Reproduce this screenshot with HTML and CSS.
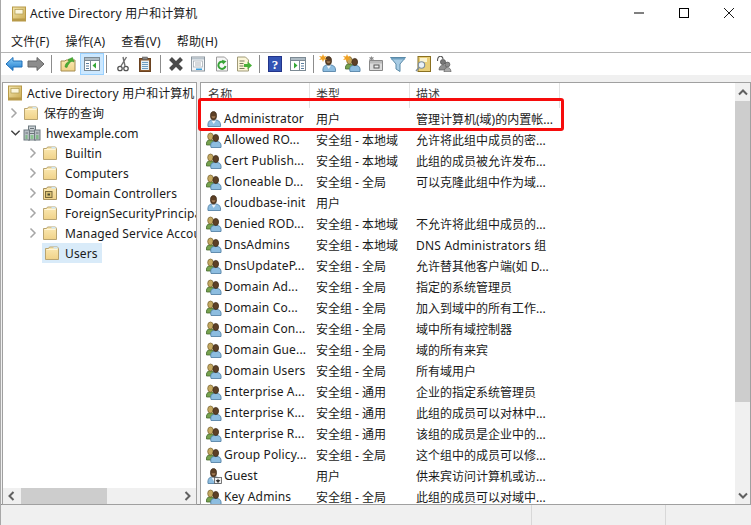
FILE: index.html
```html
<!DOCTYPE html>
<html lang="zh-CN">
<head>
<meta charset="utf-8">
<title>Active Directory 用户和计算机</title>
<link rel="stylesheet" href="styles.css">
</head>
<body>
<svg class="defs" width="0" height="0" aria-hidden="true">
  <defs>
    <linearGradient id="gBook" x1="0" y1="0" x2="1" y2="1"><stop offset="0" stop-color="#f4e7ae"/><stop offset="1" stop-color="#c9a94f"/></linearGradient>
    <linearGradient id="gFold" x1="0" y1="0" x2="0" y2="1"><stop offset="0" stop-color="#fbe9b4"/><stop offset="1" stop-color="#f0d288"/></linearGradient>
    <linearGradient id="gBlue" x1="0" y1="0" x2="0" y2="1"><stop offset="0" stop-color="#8cd0f8"/><stop offset="1" stop-color="#1c78cc"/></linearGradient>
    <symbol id="book" viewBox="0 0 16 16">
      <rect x="1.500" y="1" width="13" height="14" fill="url(#gBook)" stroke="#b89a48"/>
      <rect x="4" y="3.500" width="8" height="4.500" fill="#fbf6dc" stroke="#b09a50" stroke-width=".7"/>
      <rect x="1.500" y="12.500" width="13" height="2.500" fill="#b89a48"/>
    </symbol>
    <symbol id="folder" viewBox="0 0 16 16">
      <path d="M1.500 3.500h3l1-1.500h8l1 1.500v11h-13z" fill="url(#gFold)" stroke="#b9a470"/>
      <rect x="9.500" y="2" width="4" height="1.600" fill="#cfe6f5"/>
      <path d="M2.500 4.500h11" stroke="#fff6d8"/>
    </symbol>
    <symbol id="ou" viewBox="0 0 16 16">
      <path d="M1.500 3.500h3l1-1.500h8l1 1.500v11h-13z" fill="url(#gFold)" stroke="#a8915c"/>
      <rect x="9.500" y="2" width="4" height="1.600" fill="#cfe6f5"/>
      <rect x="3.500" y="6.500" width="6.500" height="6" fill="#d9c074" stroke="#7a6a3a"/>
      <rect x="5.500" y="8.500" width="2.500" height="2" fill="#4a4a30"/>
    </symbol>
    <symbol id="domain" viewBox="0 0 18 16">
      <rect x="5.500" y="1" width="7" height="14" fill="#c9d0d4" stroke="#6f7a80"/>
      <rect x="1" y="5" width="5.500" height="10" fill="#b5bdc2" stroke="#6f7a80"/>
      <rect x="11.500" y="5" width="5.500" height="10" fill="#b5bdc2" stroke="#6f7a80"/>
      <path d="M7 3.500h4M7 6h4M7 8.500h4M2.500 8h2.500M13 8h2.500" stroke="#6a747a"/>
      <path d="M2.500 11h2M2.500 13h2M7.500 11h3M7.500 13h3M13 11h2.500M13 13h2.500" stroke="#4fb84f" stroke-width="1.200"/>
    </symbol>
    <symbol id="user" viewBox="0 0 16 16">
      <path d="M2 15.500c-.5-4 1-6.500 4-6.500h3.500c3.500 0 5.500 2.500 5 6.500z" fill="#8dbde0" stroke="#4a7aa0" stroke-width=".8"/>
      <path d="M5.500 9.500l2.200 3.500 2.300-3.500z" fill="#eef3f8"/>
      <ellipse cx="7.500" cy="4.800" rx="3" ry="4.200" fill="#5d4026" stroke="#3a2614" stroke-width=".7"/>
      <path d="M5.500 5.300c.4 2.600 3.600 2.600 4 0z" fill="#a07a54"/>
    </symbol>
    <symbol id="guest" viewBox="0 0 16 16">
      <use href="#user"/>
      <rect x="8.500" y="9.500" width="7" height="6" fill="#f2f2f2" stroke="#5a5a5a" stroke-width=".8"/>
      <path d="M12 10.800v2M10.300 12.500h3.400L12 14.500z" stroke="#222" fill="#222" stroke-width=".8"/>
    </symbol>
    <symbol id="group" viewBox="0 0 16 16">
      <path d="M0.500 13c-.5-3 .8-5 3-5h2.500c2 0 2 3 1 5z" fill="#76a24e" stroke="#45682c" stroke-width=".8"/>
      <ellipse cx="4.500" cy="4.500" rx="2.800" ry="3.500" fill="#c4a860" stroke="#75602c" stroke-width=".7"/>
      <path d="M5 15.500c-1-4 .5-6 3.500-6h2.500c3 0 4.500 2 4 6z" fill="#8dbde0" stroke="#4a7aa0" stroke-width=".8"/>
      <ellipse cx="9.800" cy="6" rx="2.800" ry="3.600" fill="#5d4026" stroke="#3a2614" stroke-width=".7"/>
    </symbol>
    <symbol id="back" viewBox="0 0 18 16">
      <path d="M1 8l7-6.500V5h9v6H8v3.500z" fill="url(#gBlue)" stroke="#1f6fb8"/>
    </symbol>
    <symbol id="forward" viewBox="0 0 18 16">
      <path d="M17 8l-7-6.500V5H1v6h9v3.500z" fill="#8c8c8c" stroke="#666"/>
    </symbol>
    <symbol id="up" viewBox="0 0 16 16">
      <path d="M1 5h4l1-1h9v11H1z" fill="url(#gFold)" stroke="#a58c50"/>
      <path d="M5 11c0-3 2-5 4-5.500L8 3.500l4.500-2L14 6l-2-.8C10 6 8 8 7 11.500z" fill="#4cae34" stroke="#2e8a20" stroke-width=".5"/>
    </symbol>
    <symbol id="tree" viewBox="0 0 16 16">
      <rect x=".5" y="1.500" width="15" height="13" fill="#fff" stroke="#7c8a94"/>
      <rect x=".5" y="1.500" width="15" height="3" fill="#aebbc4" stroke="#7c8a94"/>
      <path d="M2 7h3v1H2zM2 9.500h3v1H2zM2 12h3v1H2z" fill="#5b7fa0"/>
      <path d="M6.500 5v9" stroke="#7c8a94"/>
      <path d="M12 6.500v6L8.500 9.500z" fill="#35a835"/>
    </symbol>
    <symbol id="view" viewBox="0 0 16 16">
      <rect x=".5" y="1.500" width="15" height="13" fill="#fff" stroke="#7c8a94"/>
      <rect x=".5" y="1.500" width="15" height="3" fill="#aebbc4" stroke="#7c8a94"/>
      <path d="M11 7h3v1h-3zM11 9.500h3v1h-3zM11 12h3v1h-3z" fill="#5b7fa0"/>
      <path d="M9.500 5v9" stroke="#7c8a94"/>
      <path d="M4 6.500v6l3.500-3z" fill="#35a835"/>
    </symbol>
    <symbol id="cut" viewBox="0 0 16 16">
      <path d="M11.500 1L6 10M8 1l2 9" stroke="#6f6f6f" stroke-width="1.400" fill="none"/>
      <circle cx="5" cy="12.500" r="2.200" fill="none" stroke="#555" stroke-width="1.300"/>
      <circle cx="11" cy="12.500" r="2.200" fill="none" stroke="#555" stroke-width="1.300"/>
    </symbol>
    <symbol id="paste" viewBox="0 0 16 16">
      <rect x="2.500" y="2.500" width="11" height="13" fill="#8a5a30" stroke="#6a4220"/>
      <rect x="4" y="4.500" width="8" height="9.500" fill="#e6f0f6"/>
      <path d="M5 6.500h6M5 8.500h6M5 10.500h6M5 12.500h6" stroke="#6d9cc0"/>
      <rect x="5.500" y="1" width="5" height="2.500" fill="#888" stroke="#555" stroke-width=".5"/>
    </symbol>
    <symbol id="del" viewBox="0 0 16 16">
      <path d="M2.500 2.500l11 11M13.500 2.500l-11 11" stroke="#4b4b4b" stroke-width="4"/>
    </symbol>
    <symbol id="props" viewBox="0 0 16 16">
      <rect x="1.500" y="1" width="13" height="14" fill="#f4f6f8" stroke="#8a949c"/>
      <rect x="2" y="1.500" width="12" height="2" fill="#b9c4cc"/>
      <rect x="3.500" y="5" width="9" height="6" fill="#fff" stroke="#9aa4ac" stroke-width=".7"/>
      <path d="M5 7h6M5 9h6" stroke="#8a949c" stroke-width=".7"/>
      <rect x="6" y="12.500" width="6" height="1.500" fill="#3ba0dc"/>
    </symbol>
    <symbol id="refresh" viewBox="0 0 16 16">
      <path d="M2.500 1h8l3 3v11h-11z" fill="#f6f6f6" stroke="#9c9c9c"/>
      <path d="M10 6.300A3.600 3.600 0 1 0 11.500 10" fill="none" stroke="#36a336" stroke-width="2"/>
      <path d="M8 3.800l4.500 1.500L9 8.500z" fill="#36a336"/>
    </symbol>
    <symbol id="export" viewBox="0 0 16 16">
      <path d="M1.500 1h8l3 3v11h-11z" fill="#fbf6d8" stroke="#a09a78"/>
      <path d="M3.500 5h5M3.500 7.500h4M3.500 10h4M3.500 12.500h5" stroke="#7a7a60"/>
      <path d="M8 8h3.500V5.500L16 9.500l-4.500 4V11H8z" fill="#48b038"/>
    </symbol>
    <symbol id="help" viewBox="0 0 14 16">
      <rect x=".5" y=".5" width="13" height="15" fill="#3454b4" stroke="#22348a"/>
      <text x="7" y="13" text-anchor="middle" class="help-q">?</text>
    </symbol>
    <symbol id="spark" viewBox="0 0 8 8">
      <path d="M4 0l1 2.500L8 2 6 4l2 2-3-.500L4 8 3 5.500 0 6l2-2-2-2 3 .500z" fill="#f0a020"/>
    </symbol>
    <symbol id="funnel" viewBox="0 0 16 16">
      <path d="M.5 1.500h15L10 8v7.500L6 13V8z" fill="#a8cce4" stroke="#5a8aa8"/>
      <path d="M1 2h14v1.500H1z" fill="#6fa0c0"/>
    </symbol>
    <symbol id="find" viewBox="0 0 16 16">
      <rect x="3" y=".5" width="12.500" height="15" fill="#e9cf78" stroke="#8a7020"/>
      <rect x="5" y="2" width="7" height="4" fill="#fbf4d0"/>
      <circle cx="6.500" cy="9" r="3.200" fill="#eaf2f8" stroke="#7d8e9c" stroke-width="1.100"/>
      <path d="M4 11.500l-3 3.500" stroke="#7d8e9c" stroke-width="1.400"/>
    </symbol>
    <symbol id="addgrp" viewBox="0 0 16 16">
      <circle cx="7" cy="6" r="2.600" fill="#777" stroke="#444" stroke-width=".6"/>
      <circle cx="11.500" cy="8.500" r="2.400" fill="#8c8c8c" stroke="#444" stroke-width=".6"/>
      <path d="M3 14c0-3 1.500-4.800 4-4.800s4 1.800 4 4.800z" fill="#8f8f8f" stroke="#555" stroke-width=".6"/>
      <path d="M8 16c0-3 1.500-4.500 3.500-4.500S15 13 15 16z" fill="#aaa" stroke="#555" stroke-width=".6"/>
      <path d="M1.500 5c0-6 5-6 5.500-2" fill="none" stroke="#555" stroke-width="1.100"/>
    </symbol>
    <symbol id="newou" viewBox="0 0 16 16">
      <path d="M1.500 4.500h13v10h-13z" fill="#dcdcdc" stroke="#888"/>
      <rect x="2" y="5" width="12" height="2.500" fill="#bbb"/>
      <rect x="6" y="9" width="5" height="3" fill="#eee" stroke="#555"/>
      <path d="M3.500 0l.8 1.500L6 1 5 2.500 6 4l-1.700-.5L3.500 5l-.8-1.500L1 4l1-1.500L1 1l1.700.5z" fill="#8a8a8a"/>
    </symbol>
    <symbol id="chev-r" viewBox="0 0 8 12"><path d="M1.500 1.500L6 6l-4.500 4.500" fill="none" stroke="#a6a6a6" stroke-width="1.500"/></symbol>
    <symbol id="chev-d" viewBox="0 0 12 8"><path d="M1.500 1.500L6 6l4.500-4.500" fill="none" stroke="#404040" stroke-width="1.500"/></symbol>
    <symbol id="sb" viewBox="0 0 10 10"><path d="M2.500 1L6.500 5l-4 4" fill="none" stroke="#606060" stroke-width="2"/></symbol>
  </defs>
</svg>

<div class="window">
  <header class="titlebar">
    <svg class="title-icon"><use href="#book"/></svg>
    <span class="title-text"><span class="lat">Active Directory </span>用户和计算机</span>
    <div class="winctl">
      <svg class="ctl" viewBox="0 0 10 10"><path d="M0 5h10" stroke="#000"/></svg>
      <svg class="ctl" viewBox="0 0 10 10"><rect x=".5" y=".5" width="9" height="9" fill="none" stroke="#000"/></svg>
      <svg class="ctl" viewBox="0 0 10 10"><path d="M0 0l10 10M10 0L0 10" stroke="#000" stroke-width=".9"/></svg>
    </div>
  </header>

  <nav class="menubar">
    <span>文件(F)</span><span>操作(A)</span><span>查看(V)</span><span>帮助(H)</span>
  </nav>

  <div class="toolbar">
    <span class="tool"><svg class="wide"><use href="#back"/></svg></span>
    <span class="tool"><svg class="wide"><use href="#forward"/></svg></span>
    <i class="sep"></i>
    <span class="tool m1"><svg><use href="#up"/></svg></span>
    <span class="tool on m1"><svg><use href="#tree"/></svg></span>
    <i class="sep narrow"></i>
    <span class="tool m2"><svg><use href="#cut"/></svg></span>
    <span class="tool"><svg><use href="#paste"/></svg></span>
    <i class="sep"></i>
    <span class="tool"><svg><use href="#del"/></svg></span>
    <span class="tool"><svg><use href="#props"/></svg></span>
    <span class="tool m2"><svg><use href="#refresh"/></svg></span>
    <span class="tool"><svg><use href="#export"/></svg></span>
    <i class="sep"></i>
    <span class="tool"><svg><use href="#help"/></svg></span>
    <span class="tool m1"><svg><use href="#view"/></svg></span>
    <i class="sep"></i>
    <span class="tool badge"><svg><use href="#user"/></svg><svg class="spark"><use href="#spark"/></svg></span>
    <span class="tool m2 badge"><svg><use href="#group"/></svg><svg class="spark"><use href="#spark"/></svg></span>
    <span class="tool m1"><svg><use href="#newou"/></svg></span>
    <span class="tool"><svg><use href="#funnel"/></svg></span>
    <span class="tool m3"><svg><use href="#find"/></svg></span>
    <span class="tool mn1"><svg><use href="#addgrp"/></svg></span>
  </div>

  <div class="panes">
    <aside class="pane tree-pane">
      <ul class="tree">
        <li class="node root"><svg class="ic"><use href="#book"/></svg><span><span class="lat">Active Directory </span>用户和计算机</span></li>
        <li class="node l1"><svg class="arrow"><use href="#chev-r"/></svg><svg class="ic"><use href="#folder"/></svg><span>保存的查询</span></li>
        <li class="node l1"><svg class="arrow down"><use href="#chev-d"/></svg><svg class="ic big"><use href="#domain"/></svg><span>hwexample.com</span></li>
        <li class="node l2"><svg class="arrow"><use href="#chev-r"/></svg><svg class="ic"><use href="#folder"/></svg><span class="lat">Builtin</span></li>
        <li class="node l2"><svg class="arrow"><use href="#chev-r"/></svg><svg class="ic"><use href="#folder"/></svg><span class="lat">Computers</span></li>
        <li class="node l2"><svg class="arrow"><use href="#chev-r"/></svg><svg class="ic"><use href="#ou"/></svg><span class="lat">Domain Controllers</span></li>
        <li class="node l2"><svg class="arrow"><use href="#chev-r"/></svg><svg class="ic"><use href="#folder"/></svg><span class="lat">ForeignSecurityPrincipals</span></li>
        <li class="node l2"><svg class="arrow"><use href="#chev-r"/></svg><svg class="ic"><use href="#folder"/></svg><span class="lat">Managed Service Accounts</span></li>
        <li class="node l2 leaf"><div class="selected"><svg class="ic"><use href="#folder"/></svg><span class="lat">Users</span></div></li>
      </ul>
      <div class="hscroll">
        <svg class="sb-btn flip"><use href="#sb"/></svg>
        <div class="hthumb"></div>
        <svg class="sb-btn"><use href="#sb"/></svg>
      </div>
    </aside>

    <section class="pane list-pane">
      <div class="list">
        <div class="row head"><div class="c1">名称</div><div class="c2">类型</div><div class="c3">描述</div></div>
        <div class="row"><div class="c1"><svg class="ic"><use href="#user"/></svg>Administrator</div><div class="c2">用户</div><div class="c3">管理计算机(域)的内置帐...</div></div>
        <div class="row"><div class="c1"><svg class="ic"><use href="#group"/></svg>Allowed RO...</div><div class="c2">安全组 - 本地域</div><div class="c3">允许将此组中成员的密...</div></div>
        <div class="row"><div class="c1"><svg class="ic"><use href="#group"/></svg>Cert Publish...</div><div class="c2">安全组 - 本地域</div><div class="c3">此组的成员被允许发布...</div></div>
        <div class="row"><div class="c1"><svg class="ic"><use href="#group"/></svg>Cloneable D...</div><div class="c2">安全组 - 全局</div><div class="c3">可以克隆此组中作为域...</div></div>
        <div class="row"><div class="c1"><svg class="ic"><use href="#user"/></svg>cloudbase-init</div><div class="c2">用户</div><div class="c3"></div></div>
        <div class="row"><div class="c1"><svg class="ic"><use href="#group"/></svg>Denied ROD...</div><div class="c2">安全组 - 本地域</div><div class="c3">不允许将此组中成员的...</div></div>
        <div class="row"><div class="c1"><svg class="ic"><use href="#group"/></svg>DnsAdmins</div><div class="c2">安全组 - 本地域</div><div class="c3"><span class="lat">DNS Administrators </span>组</div></div>
        <div class="row"><div class="c1"><svg class="ic"><use href="#group"/></svg>DnsUpdateP...</div><div class="c2">安全组 - 全局</div><div class="c3">允许替其他客户端(如 D...</div></div>
        <div class="row"><div class="c1"><svg class="ic"><use href="#group"/></svg>Domain Ad...</div><div class="c2">安全组 - 全局</div><div class="c3">指定的系统管理员</div></div>
        <div class="row"><div class="c1"><svg class="ic"><use href="#group"/></svg>Domain Co...</div><div class="c2">安全组 - 全局</div><div class="c3">加入到域中的所有工作...</div></div>
        <div class="row"><div class="c1"><svg class="ic"><use href="#group"/></svg>Domain Con...</div><div class="c2">安全组 - 全局</div><div class="c3">域中所有域控制器</div></div>
        <div class="row"><div class="c1"><svg class="ic"><use href="#group"/></svg>Domain Gue...</div><div class="c2">安全组 - 全局</div><div class="c3">域的所有来宾</div></div>
        <div class="row"><div class="c1"><svg class="ic"><use href="#group"/></svg>Domain Users</div><div class="c2">安全组 - 全局</div><div class="c3">所有域用户</div></div>
        <div class="row"><div class="c1"><svg class="ic"><use href="#group"/></svg>Enterprise A...</div><div class="c2">安全组 - 通用</div><div class="c3">企业的指定系统管理员</div></div>
        <div class="row"><div class="c1"><svg class="ic"><use href="#group"/></svg>Enterprise K...</div><div class="c2">安全组 - 通用</div><div class="c3">此组的成员可以对林中...</div></div>
        <div class="row"><div class="c1"><svg class="ic"><use href="#group"/></svg>Enterprise R...</div><div class="c2">安全组 - 通用</div><div class="c3">该组的成员是企业中的...</div></div>
        <div class="row"><div class="c1"><svg class="ic"><use href="#group"/></svg>Group Policy...</div><div class="c2">安全组 - 全局</div><div class="c3">这个组中的成员可以修...</div></div>
        <div class="row"><div class="c1"><svg class="ic"><use href="#guest"/></svg>Guest</div><div class="c2">用户</div><div class="c3">供来宾访问计算机或访...</div></div>
        <div class="row"><div class="c1"><svg class="ic"><use href="#group"/></svg>Key Admins</div><div class="c2">安全组 - 全局</div><div class="c3">此组的成员可以对域中...</div></div>
      </div>
      <div class="vscroll">
        <svg class="sb-btn up"><use href="#sb"/></svg>
        <div class="vthumb"></div>
        <svg class="sb-btn dn"><use href="#sb"/></svg>
      </div>
      <div class="highlight"></div>
    </section>
  </div>

  <footer class="statusbar"><div class="s1"></div><div class="s2"></div><div class="s3"></div></footer>
</div>
</body>
</html>
```

FILE: styles.css
```css
* { box-sizing: border-box; }
html, body { margin: 0; padding: 0; }
body {
  width: 751px; height: 525px; overflow: hidden; background: #fff;
  font-family: "Noto Sans", "Noto Sans CJK SC", sans-serif;
  font-size: 12px; color: #1a1a1a;
}
.defs { position: absolute; }
.window {
  width: 751px; height: 525px; display: flex; flex-direction: column;
  border-left: 1px solid #a8a8a8;
}
ul { list-style: none; margin: 0; padding: 0; }
svg { display: block; flex: none; }
.lat { letter-spacing: .2px; }

.titlebar { height: 30px; display: flex; align-items: center; padding-left: 10px; background: #fff; }
.title-icon { width: 16px; height: 16px; margin-top: -2px; }
.title-text { margin-left: 3px; line-height: 26px; margin-top: -2px; }
.winctl { margin-left: auto; display: flex; gap: 35px; padding-right: 17px; margin-top: -4px; }
.ctl { width: 10px; height: 10px; }

.menubar {
  display: flex; gap: 16px; align-items: center; letter-spacing: .2px;
  padding: 0 0 0 10px; background: #fff; border-bottom: 1px solid #b4b4b4; height: 23px;
}

.toolbar { height: 22px; display: flex; align-items: center; padding-left: 2px; background: #fff; }
.tool { width: 22px; height: 22px; display: flex; align-items: center; justify-content: center; position: relative; }
.tool svg { width: 16px; height: 16px; }
.tool svg.wide { width: 18px; }
.tool.on { width: 24px; background: #cce8ff; border: 1px solid #99d1ff; }
.tool.m1 { margin-left: 1px; }
.tool.m2 { margin-left: 2px; }
.tool.m3 { margin-left: 3px; }
.tool.mn1 { margin-left: -1px; }
.sep { width: 1px; height: 18px; background: #8c8c8c; margin: 0 4px; }
.sep.narrow { margin: 0 3px 0 2px; }
.tool .spark { position: absolute; left: 1px; top: 1px; width: 8px; height: 8px; }
.help-q { font: bold 13px "Liberation Serif", serif; fill: #fff; }

.panes { flex: 1; min-height: 0; display: flex; gap: 3px; padding: 7px 0 0 1px; background: #f0f0f0; }
.pane { border: 1px solid #a0a0a0; background: #fff; height: 423px; position: relative; }
.tree-pane { width: 195px; display: flex; flex-direction: column; overflow: hidden; }
.list-pane { width: 551px; display: flex; }

.tree { flex: 1; min-height: 0; }
.node { height: 20px; display: flex; align-items: center; white-space: nowrap; color: #1a1a1a; }
.node .ic { width: 16px; height: 16px; }
.node span { margin-left: 5px; }
.node .lat { margin-left: 7px; letter-spacing: .12px; }
.node span .lat { margin-left: 0; letter-spacing: .2px; }
.node.root { padding-left: 4px; }
.node.root > span { margin-left: 4px; }
.node.l1 { padding-left: 7px; }
.node.l2 { padding-left: 26px; }
.arrow { width: 8px; height: 12px; margin-right: 5px; }
.arrow.down { width: 11px; height: 8px; margin: 0 2px 0 0; }
.ic.big { width: 18px; }
.leaf { padding-left: 39px !important; }
.selected { display: flex; align-items: center; height: 20px; width: 60px; background: #d9ebf9; padding-left: 2px; }
.selected .lat { margin-left: 5px; }

.hscroll { height: 16px; flex: none; display: flex; align-items: center; background: #f0f0f0; }
.hthumb { width: 86px; height: 16px; background: #cdcdcd; margin-left: 5px; }
.sb-btn { width: 10px; height: 10px; }
.hscroll .flip { transform: rotate(180deg); margin-left: 3px; }
.hscroll .sb-btn:last-child { margin-left: auto; margin-right: 3px; }

.list { flex: 1; overflow: hidden; min-width: 0; }
.row { height: 21px; display: flex; align-items: center; white-space: nowrap; }
.row.head { height: 25px; color: #3a3a3a; }
.c1 { width: 109px; padding-left: 5px; display: flex; align-items: center; gap: 2px; overflow: hidden; letter-spacing: .15px; }
.c2 { width: 100px; padding-left: 6px; }
.c3 { width: 150px; padding-left: 6px; }
.c1 .ic { width: 16px; height: 16px; }
.head .c1, .head .c2, .head .c3 { height: 25px; line-height: 24px; border-right: 1px solid #e3e3e3; padding-left: 6px; }
.head .c1 { display: block; padding-left: 7px; }

.vscroll { width: 15px; flex: none; background: #f0f0f0; display: flex; flex-direction: column; align-items: center; position: relative; }
.vthumb { width: 15px; height: 301px; background: #cdcdcd; margin-top: 4px; }
.vscroll .up { transform: rotate(-90deg); margin-top: 4px; }
.vscroll .dn { transform: rotate(90deg); margin-top: auto; margin-bottom: 3px; }

.highlight {
  position: absolute; left: -3px; top: 15px; width: 366px; height: 33px;
  border: 3px solid #f60c0c; border-radius: 3px; pointer-events: none;
}

.statusbar { height: 21px; display: flex; background: #f0f0f0; border-top: 1px solid #8c8c8c; }
.s1 { width: 531px; border-right: 1px solid #d8d8d8; }
.s2 { width: 134px; border-right: 1px solid #d8d8d8; }
.s3 { flex: 1; }
```
